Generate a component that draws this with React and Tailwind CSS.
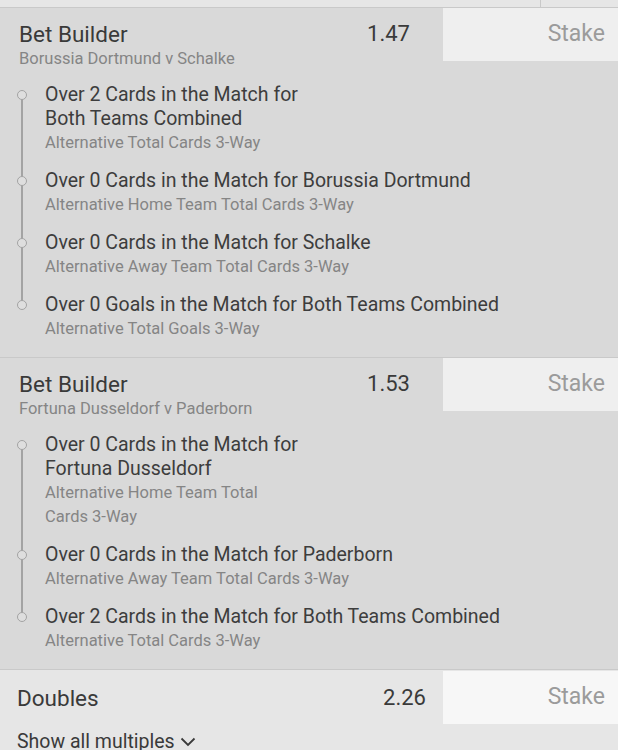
import React from 'react';

const builders = [
  {
    odds: '1.47',
    match: 'Borussia Dortmund v Schalke',
    legs: [
      { title: ['Over 2 Cards in the Match for', 'Both Teams Combined'], market: ['Alternative Total Cards 3-Way'] },
      { title: ['Over 0 Cards in the Match for Borussia Dortmund'], market: ['Alternative Home Team Total Cards 3-Way'] },
      { title: ['Over 0 Cards in the Match for Schalke'], market: ['Alternative Away Team Total Cards 3-Way'] },
      { title: ['Over 0 Goals in the Match for Both Teams Combined'], market: ['Alternative Total Goals 3-Way'] },
    ],
  },
  {
    odds: '1.53',
    match: 'Fortuna Dusseldorf v Paderborn',
    legs: [
      { title: ['Over 0 Cards in the Match for', 'Fortuna Dusseldorf'], market: ['Alternative Home Team Total', 'Cards 3-Way'] },
      { title: ['Over 0 Cards in the Match for Paderborn'], market: ['Alternative Away Team Total Cards 3-Way'] },
      { title: ['Over 2 Cards in the Match for Both Teams Combined'], market: ['Alternative Total Cards 3-Way'] },
    ],
  },
];

function StakeBox({ light }) {
  return (
    <div
      className={
        'w-[175px] h-[53px] shrink-0 flex items-center justify-end pr-[13px] text-[23px] text-[#9b9b9b] ' +
        (light ? 'bg-[#f7f7f7]' : 'bg-[#efefef]')
      }
    >
      Stake
    </div>
  );
}

function Leg({ leg, last }) {
  return (
    <div className="relative">
      {!last && <div className="absolute left-[-24px] top-[12px] bottom-[-26px] w-[2px] bg-[#a3a3a3]" />}
      <div className="absolute left-[-28px] top-[7px] w-[10px] h-[10px] rounded-full border-[1.5px] border-[#a3a3a3] bg-[#dedede]" />
      <div className="text-[19.5px] leading-[24px] text-[#3d3d3d]">
        {leg.title.map((t) => (
          <div key={t}>{t}</div>
        ))}
      </div>
      <div className="text-[16.5px] leading-[24px] text-[#858585]">
        {leg.market.map((t) => (
          <div key={t}>{t}</div>
        ))}
      </div>
    </div>
  );
}

function BetBuilder({ bet }) {
  return (
    <div className="bg-[#d9d9d9] border-b border-[#c9c9c9] pb-[16px]">
      <div className="flex">
        <div className="flex-1 pl-[19px] pt-[12px]">
          <div className="text-[22.5px] leading-[28px] text-[#3a3a3a]">Bet Builder</div>
          <div className="text-[16.5px] leading-[22px] text-[#858585]">{bet.match}</div>
        </div>
        <div className="pt-[12px] pr-[33px] text-[22px] leading-[28px] text-[#3a3a3a]">{bet.odds}</div>
        <StakeBox />
      </div>
      <div className="pl-[45px] mt-[13px] flex flex-col gap-[14px]">
        {bet.legs.map((leg, i) => (
          <Leg key={i} leg={leg} last={i === bet.legs.length - 1} />
        ))}
      </div>
    </div>
  );
}

export default function App() {
  return (
    <div className="w-[618px] h-[750px] overflow-hidden bg-[#e6e6e6] font-['Roboto',sans-serif]">
      <div className="flex h-[8px] bg-[#e6e6e6] border-b border-[#c9c9c9]">
        <div className="flex-1" />
        <div className="w-[78px] border-l border-[#c9c9c9]" />
      </div>
      {builders.map((bet) => (
        <BetBuilder key={bet.match} bet={bet} />
      ))}
      <div className="bg-[#e6e6e6]">
        <div className="flex items-center pt-[1px]">
          <div className="flex-1 pl-[17px] text-[22.5px] leading-[28px] text-[#3a3a3a]">Doubles</div>
          <div className="pr-[17px] text-[22px] leading-[28px] text-[#3a3a3a]">2.26</div>
          <StakeBox light />
        </div>
        <div className="flex items-center gap-[5px] pl-[17px] mt-[6px] text-[19.5px] leading-[24px] text-[#3a3a3a]">
          Show all multiples
          <svg width="16" height="10" viewBox="0 0 16 10" fill="none">
            <path d="M1.5 1.5 L8 8 L14.5 1.5" stroke="#3a3a3a" strokeWidth="1.8" />
          </svg>
        </div>
      </div>
    </div>
  );
}
